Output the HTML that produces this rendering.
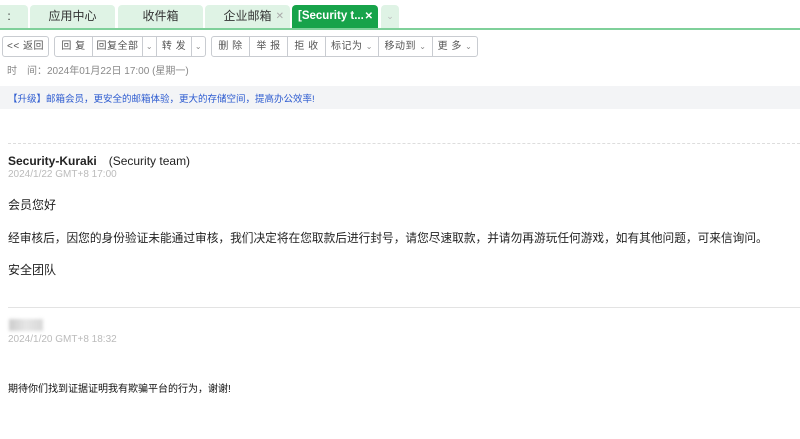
<!DOCTYPE html>
<html><head><meta charset="utf-8"><style>
*{margin:0;padding:0;box-sizing:border-box}
body{width:800px;height:439px;background:#fff;font-family:"Liberation Sans","Noto Sans CJK SC",sans-serif;position:relative;overflow:hidden;color:#333}
.a{position:absolute;white-space:nowrap}
.tab{position:absolute;top:5px;height:23px;background:#dff3e5;border-radius:4px 4px 0 0;font-size:12px;color:#333;text-align:center;line-height:23px;overflow:hidden}
.x{color:#aaa;font-size:10px;position:absolute;right:8px;top:0}
.btn{position:absolute;top:36px;height:21px;border:1px solid #c9ccd1;background:#fff;font-size:10px;color:#555;text-align:center;line-height:19px;letter-spacing:0.5px}
.dv{font-size:8px;color:#888}
</style></head><body>
<div class="tab" style="left:-10px;width:38px">:</div>
<div class="tab" style="left:30px;width:85px">应用中心</div>
<div class="tab" style="left:118px;width:85px">收件箱</div>
<div class="tab" style="left:205px;width:85px">企业邮箱<span class="x" style="right:6px">✕</span></div>
<div class="tab" style="left:292px;width:86px;background:#17a34a;color:#fff;font-weight:bold;text-align:left;padding-left:6px;font-size:11.5px">[Security t...<span class="x" style="color:#fff;right:5px;background:#17a34a;padding-left:2px">✕</span></div>
<div class="tab" style="left:381px;width:18px;color:#bbb;font-size:9px">⌄</div>
<div class="a" style="left:0;top:28px;width:800px;height:2px;background:#7fd09a"></div>

<div class="btn" style="left:2px;width:47px;border-radius:3px">&lt;&lt; 返回</div>
<div class="btn" style="left:54px;width:39px;border-radius:3px 0 0 3px">回 复</div>
<div class="btn" style="left:92px;width:51px">回复全部</div>
<div class="btn" style="left:142px;width:15px"><span class="dv">⌄</span></div>
<div class="btn" style="left:156px;width:36px">转 发</div>
<div class="btn" style="left:191px;width:15px;border-radius:0 3px 3px 0"><span class="dv">⌄</span></div>
<div class="btn" style="left:211px;width:39px;border-radius:3px 0 0 3px">删 除</div>
<div class="btn" style="left:249px;width:39px">举 报</div>
<div class="btn" style="left:287px;width:39px">拒 收</div>
<div class="btn" style="left:325px;width:54px">标记为 <span class="dv">⌄</span></div>
<div class="btn" style="left:378px;width:55px">移动到 <span class="dv">⌄</span></div>
<div class="btn" style="left:432px;width:46px;border-radius:0 3px 3px 0">更 多 <span class="dv">⌄</span></div>

<div class="a" style="left:7px;top:62px;font-size:10px;color:#888">时　间：2024年01月22日 17:00 (星期一)</div>
<div class="a" style="left:0;top:86px;width:800px;height:23px;background:#f3f4f6"></div>
<div class="a" style="left:8px;top:91px;font-size:9.5px;color:#2d5bd0">【升级】邮箱会员，更安全的邮箱体验，更大的存储空间，提高办公效率!</div>

<div class="a" style="left:8px;top:143px;width:792px;border-top:1px dashed #ddd"></div>
<div class="a" style="left:8px;top:152px;font-size:12px;color:#222"><b>Security-Kuraki</b>　(Security team)</div>
<div class="a" style="left:8px;top:169px;font-size:10px;color:#bbb">2024/1/22 GMT+8 17:00</div>
<div class="a" style="left:8px;top:196px;font-size:12px;color:#222">会员您好</div>
<div class="a" style="left:8px;top:229px;font-size:11.7px;color:#222">经审核后，因您的身份验证未能通过审核，我们决定将在您取款后进行封号，请您尽速取款，并请勿再游玩任何游戏，如有其他问题，可来信询问。</div>
<div class="a" style="left:8px;top:261px;font-size:12px;color:#222">安全团队</div>

<div class="a" style="left:8px;top:307px;width:792px;border-top:1px solid #e3e3e3"></div>
<div class="a" style="left:9px;top:319px;width:34px;height:12px;background:linear-gradient(90deg,#ccc,#e6e6e6,#d8d8d8);filter:blur(1.5px)"></div>
<div class="a" style="left:8px;top:334px;font-size:10px;color:#bbb">2024/1/20 GMT+8 18:32</div>
<div class="a" style="left:8px;top:380px;font-size:10px;color:#111">期待你们找到证据证明我有欺骗平台的行为，谢谢!</div>
</body></html>
